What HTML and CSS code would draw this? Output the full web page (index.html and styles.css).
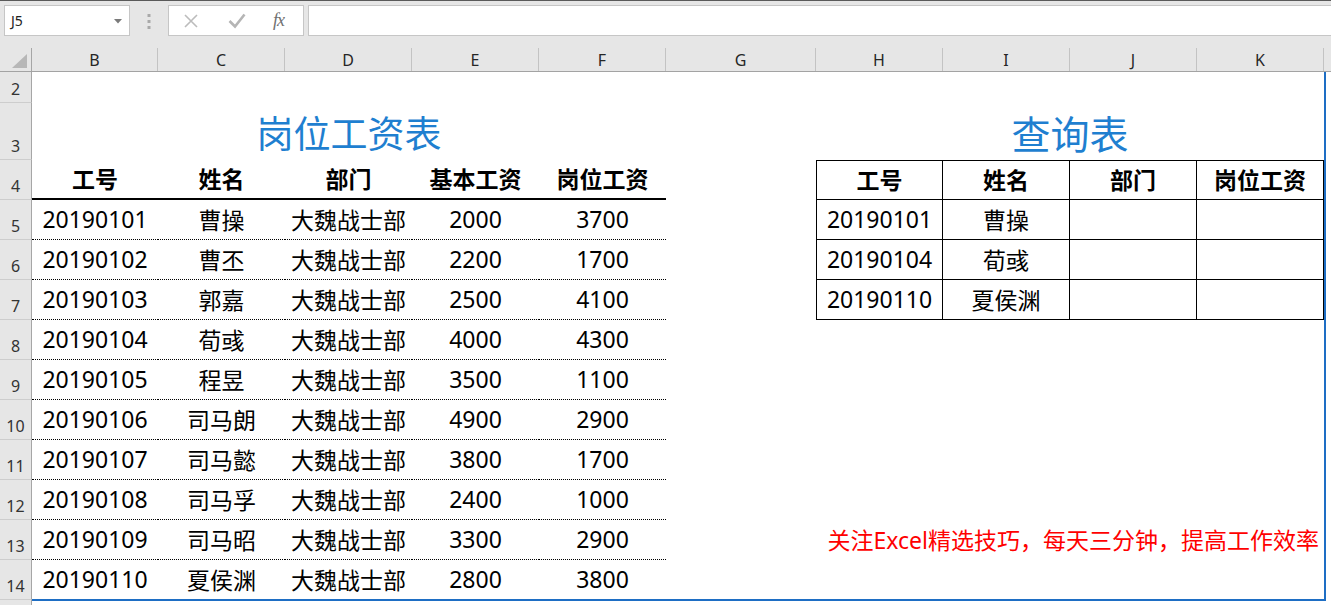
FILE: index.html
```html
<!DOCTYPE html>
<html lang="zh">
<head>
<meta charset="utf-8">
<title>岗位工资表</title>
<link rel="stylesheet" href="styles.css">
</head>
<body>
<div class="toolbar">
  <div class="namebox"><span>J5</span>
    <svg class="dd" width="8" height="5" viewBox="0 0 8 5"><path d="M0 0H8L4 4.5Z" fill="#7a7a7a"/></svg>
  </div>
  <div class="grip">
    <svg width="4" height="15" viewBox="0 0 4 15"><rect x="0.5" y="0" width="3" height="3" fill="#a9a9a9"/><rect x="0.5" y="6" width="3" height="3" fill="#a9a9a9"/><rect x="0.5" y="12" width="3" height="3" fill="#a9a9a9"/></svg>
  </div>
  <div class="fxbox">
    <svg class="ico" width="16" height="16" viewBox="0 0 16 16"><path d="M2 2L14 14M14 2L2 14" stroke="#bcbcbc" stroke-width="1.6" fill="none"/></svg>
    <svg class="ico" width="18" height="16" viewBox="0 0 18 16"><path d="M1.5 8L7 13.5L16.5 1.5" stroke="#b5b5b5" stroke-width="2.6" fill="none"/></svg>
    <span class="fx">fx</span>
  </div>
  <div class="formula"></div>
</div>

<div class="sheet">
  <div class="colheads">
    <div class="corner"><svg width="15" height="14" viewBox="0 0 15 14"><path d="M15 0V14H0Z" fill="#b7b7b7"/></svg></div>
    <div class="ch">B</div><div class="ch">C</div><div class="ch">D</div><div class="ch">E</div><div class="ch">F</div>
    <div class="ch">G</div><div class="ch">H</div><div class="ch">I</div><div class="ch">J</div><div class="ch">K</div>
    <div class="ch rest"></div>
  </div>

  <div class="row r2"><div class="rh">2</div></div>

  <div class="row r3">
    <div class="rh">3</div>
    <div class="c title tl">岗位工资表</div>
    <div class="c"></div>
    <div class="c title tr">查询表</div>
  </div>

  <div class="row">
    <div class="rh">4</div>
    <div class="c lh">工号</div><div class="c lh">姓名</div><div class="c lh">部门</div><div class="c lh">基本工资</div><div class="c lh">岗位工资</div>
    <div class="c"></div>
    <div class="c rt first top b">工号</div><div class="c rt top b">姓名</div><div class="c rt top b">部门</div><div class="c rt top b">岗位工资</div>
  </div>

  <div class="row">
    <div class="rh">5</div>
    <div class="c lt">20190101</div><div class="c lt">曹操</div><div class="c lt">大魏战士部</div><div class="c lt">2000</div><div class="c lt">3700</div>
    <div class="c"></div>
    <div class="c rt first">20190101</div><div class="c rt">曹操</div><div class="c rt"></div><div class="c rt"></div>
  </div>

  <div class="row">
    <div class="rh">6</div>
    <div class="c lt">20190102</div><div class="c lt">曹丕</div><div class="c lt">大魏战士部</div><div class="c lt">2200</div><div class="c lt">1700</div>
    <div class="c"></div>
    <div class="c rt first">20190104</div><div class="c rt">荀彧</div><div class="c rt"></div><div class="c rt"></div>
  </div>

  <div class="row">
    <div class="rh">7</div>
    <div class="c lt">20190103</div><div class="c lt">郭嘉</div><div class="c lt">大魏战士部</div><div class="c lt">2500</div><div class="c lt">4100</div>
    <div class="c"></div>
    <div class="c rt first">20190110</div><div class="c rt">夏侯渊</div><div class="c rt"></div><div class="c rt"></div>
  </div>

  <div class="row">
    <div class="rh">8</div>
    <div class="c lt">20190104</div><div class="c lt">荀彧</div><div class="c lt">大魏战士部</div><div class="c lt">4000</div><div class="c lt">4300</div>
  </div>

  <div class="row">
    <div class="rh">9</div>
    <div class="c lt">20190105</div><div class="c lt">程昱</div><div class="c lt">大魏战士部</div><div class="c lt">3500</div><div class="c lt">1100</div>
  </div>

  <div class="row">
    <div class="rh">10</div>
    <div class="c lt">20190106</div><div class="c lt">司马朗</div><div class="c lt">大魏战士部</div><div class="c lt">4900</div><div class="c lt">2900</div>
  </div>

  <div class="row">
    <div class="rh">11</div>
    <div class="c lt">20190107</div><div class="c lt">司马懿</div><div class="c lt">大魏战士部</div><div class="c lt">3800</div><div class="c lt">1700</div>
  </div>

  <div class="row">
    <div class="rh">12</div>
    <div class="c lt">20190108</div><div class="c lt">司马孚</div><div class="c lt">大魏战士部</div><div class="c lt">2400</div><div class="c lt">1000</div>
  </div>

  <div class="row">
    <div class="rh">13</div>
    <div class="c lt">20190109</div><div class="c lt">司马昭</div><div class="c lt">大魏战士部</div><div class="c lt">3300</div><div class="c lt">2900</div>
    <div class="c"></div>
    <div class="c note">关注Excel精选技巧，每天三分钟，提高工作效率</div>
  </div>

  <div class="row">
    <div class="rh">14</div>
    <div class="c lt">20190110</div><div class="c lt">夏侯渊</div><div class="c lt">大魏战士部</div><div class="c lt">2800</div><div class="c lt">3800</div>
  </div>

  <div class="row last"><div class="rh"></div></div>

  <div class="sel"></div>
</div>
</body>
</html>
```

FILE: styles.css
```css
* {
  box-sizing: border-box;
  margin: 0;
  padding: 0;
}

body {
  width: 1331px;
  height: 605px;
  overflow: hidden;
  background: #ffffff;
  font-family: "Noto Sans", "Noto Sans CJK SC", sans-serif;
  color: #000;
}

/* ---------- formula toolbar ---------- */
.toolbar {
  height: 48px;
  background: #e6e6e6;
  border-top: 1px solid #5a5a5a;
  display: flex;
  align-items: flex-start;
  padding: 4px 0 0 4px;
}

.namebox {
  width: 126px;
  height: 31px;
  background: #fff;
  border: 1px solid #c6c6c6;
  display: flex;
  align-items: center;
  justify-content: space-between;
  padding: 0 7px 0 6px;
  font-size: 14px;
  color: #222;
}

.namebox .dd {
  margin-top: 1px;
}

.grip {
  width: 38px;
  display: flex;
  justify-content: center;
  padding-top: 9px;
}

.fxbox {
  width: 136px;
  height: 31px;
  background: #fff;
  border: 1px solid #c6c6c6;
  display: flex;
  align-items: center;
  padding-left: 14px;
  gap: 29px;
  margin-right: 4px;
}

.fx {
  font-family: "Liberation Serif", serif;
  font-style: italic;
  font-size: 18px;
  color: #707070;
  margin-left: -2px;
  letter-spacing: -1px;
}

.formula {
  flex: 1;
  height: 31px;
  background: #fff;
  border: 1px solid #c6c6c6;
  border-right: none;
}

/* ---------- sheet grid ---------- */
.sheet {
  position: relative;
}

.colheads,
.row {
  display: grid;
  grid-template-columns: 32px 126px 127px 127px 127px 127px 150px 127px 127px 127px 127px 1fr;
}

.colheads {
  height: 24px;
  background: #e6e6e6;
  border-bottom: 1px solid #a3a3a3;
}

.corner {
  border-right: 1px solid #a6a6a6;
  display: flex;
  align-items: flex-end;
  justify-content: flex-end;
  padding: 0 4px 3px 0;
}

.ch {
  border-right: 1px solid #c3c3c3;
  display: flex;
  align-items: center;
  justify-content: center;
  font-size: 16px;
  color: #262626;
  padding-top: 1px;
}

.ch.rest {
  border-right: none;
}

.row {
  height: 40px;
}

.row.r2 {
  height: 31px;
}

.row.r3 {
  height: 57px;
}

.row.last {
  height: 10px;
}

.rh {
  background: #e6e6e6;
  border-right: 1px solid #a6a6a6;
  border-bottom: 1px solid #cdcdcd;
  display: flex;
  align-items: flex-end;
  justify-content: center;
  font-size: 16px;
  line-height: 1;
  color: #333;
  padding-bottom: 5px;
}

.c {
  display: flex;
  align-items: center;
  justify-content: center;
  font-size: 23px;
  white-space: nowrap;
  padding-bottom: 2px;
}

.title {
  font-size: 37px;
  color: #1f7fd0;
  padding-bottom: 0;
}

.title.tl {
  grid-column: 2 / 7;
}

.title.tr {
  grid-column: 8 / 12;
  font-size: 39px;
}

.lh {
  font-weight: 700;
  border-bottom: 2px solid #000;
}

.lt {
  border-bottom: 1px dotted #000;
}

.rt {
  border-right: 1px solid #000;
  border-bottom: 1px solid #000;
}

.rt.first {
  border-left: 1px solid #000;
}

.rt.top {
  border-top: 1px solid #000;
}

.b {
  font-weight: 700;
}

.note {
  grid-column: 8 / 12;
  justify-content: flex-end;
  color: #ff0000;
  padding-right: 5px;
}

.sel {
  position: absolute;
  left: 32px;
  top: 24px;
  width: 1294px;
  height: 529px;
  border-right: 2px solid #1e6ec4;
  border-bottom: 2px solid #1e6ec4;
  pointer-events: none;
}
```
